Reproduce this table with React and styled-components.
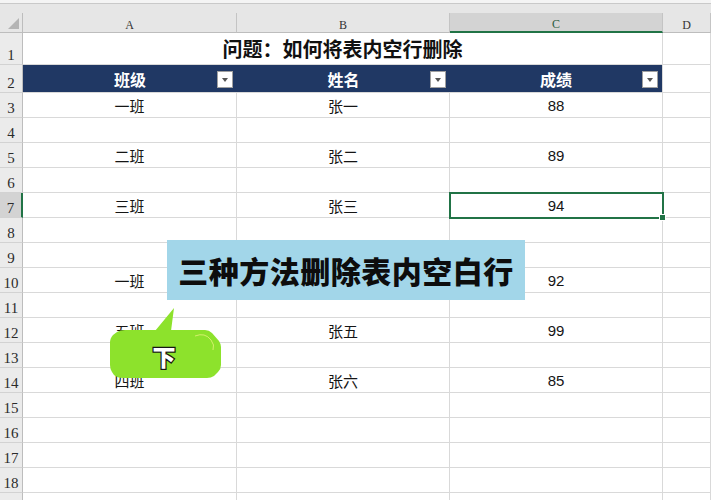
import React from 'react'
import styled, { createGlobalStyle } from 'styled-components'

const GlobalStyle = createGlobalStyle`
    html, body {
        margin: 0;
        padding: 0;
        background: #fff;
        overflow: hidden;
    }
    body {
        font-family: "Liberation Sans", "Noto Sans CJK SC", sans-serif;
    }
`

const Page = styled.div`
    position: relative;
    width: 711px;
    height: 500px;
    overflow: hidden;
    background: #fff;
`

const TopBar = styled.div`
    height: 13px;
    background: linear-gradient(#f4f4f4 0 3px, #c9c9c9 3px 4px, #e6e6e6 4px);
`

const Grid = styled.div`
    display: grid;
    grid-template-columns: 23px 214px 213px 213px 48px;
    grid-template-rows: 20px 32px 28px repeat(17, 25px);
`

const Corner = styled.div`
    box-sizing: border-box;
    background: #e6e6e6;
    border-right: 1px solid #bdbdbd;
    border-bottom: 1px solid #bdbdbd;
    display: flex;
    justify-content: flex-end;
    align-items: flex-end;
    padding: 0 3px 3px 0;
`

const SelectAll = styled.span`
    width: 0;
    height: 0;
    border-left: 11px solid transparent;
    border-bottom: 11px solid #b4b4b4;
`

const ColHead = styled.div`
    box-sizing: border-box;
    background: ${p => p.active ? '#d3d3d3' : '#e6e6e6'};
    border-right: 1px solid #c4c4c4;
    border-bottom: ${p => p.active ? '2px solid #217346' : '1px solid #bdbdbd'};
    color: ${p => p.active ? '#2a5c40' : '#333'};
    font: 12px/14px "Liberation Serif", serif;
    display: flex;
    justify-content: center;
    align-items: flex-end;
`

const RowHead = styled.div`
    box-sizing: border-box;
    background: ${p => p.active ? '#d3d3d3' : '#ebebeb'};
    border-right: ${p => p.active ? '2px solid #217346' : '1px solid #bdbdbd'};
    border-bottom: 1px solid #d2d2d2;
    color: #2b2b2b;
    font: 15px/17px "Liberation Serif", serif;
    display: flex;
    justify-content: center;
    align-items: flex-end;
`

const Cell = styled.div`
    position: relative;
    box-sizing: border-box;
    border-right: 1px solid #d9d9d9;
    border-bottom: 1px solid #d9d9d9;
    color: #151515;
    font-size: 15px;
    display: flex;
    justify-content: center;
    align-items: center;
    outline: ${p => p.selected ? '2px solid #217346' : 'none'};
    outline-offset: -1px;
    z-index: ${p => p.selected ? 1 : 0};

    ${p => p.selected && `
        &::after {
            content: '';
            position: absolute;
            right: -4px;
            bottom: -4px;
            width: 5px;
            height: 5px;
            background: #217346;
            border: 1px solid #fff;
        }
    `}
`

const TitleCell = styled.div`
    grid-column: span 3;
    box-sizing: border-box;
    border-right: 1px solid #d9d9d9;
    border-bottom: 1px solid #d9d9d9;
    font: 700 20px "Noto Sans CJK SC", sans-serif;
    color: #111;
    display: flex;
    justify-content: center;
    align-items: center;
`

const HeadCell = styled.div`
    box-sizing: border-box;
    background: #203864;
    border-bottom: 1px solid #d9d9d9;
    border-right: ${p => p.last ? '1px solid #d9d9d9' : 'none'};
    color: #fff;
    font: 700 16px "Noto Sans CJK SC", sans-serif;
    display: grid;
    grid-template-columns: 20px 1fr 20px;
    align-items: center;
`

const HeadLabel = styled.span`
    grid-column: 2;
    text-align: center;
`

const FilterButton = styled.span`
    box-sizing: border-box;
    width: 16px;
    height: 17px;
    margin-top: 2px;
    background: #fff;
    border: 1px solid #a0a0a0;
    display: flex;
    justify-content: center;
    align-items: center;

    &::before {
        content: '';
        border-left: 3.5px solid transparent;
        border-right: 3.5px solid transparent;
        border-top: 4px solid #555;
    }
`

const Caption = styled.div`
    position: absolute;
    left: 167px;
    top: 240px;
    width: 358px;
    height: 60px;
    background: #a2d6e9;
    color: #0d0d0d;
    font: 900 30px "Noto Sans CJK SC", sans-serif;
    letter-spacing: 0.5px;
    display: flex;
    justify-content: center;
    align-items: center;
`

const Bubble = styled.div`
    position: absolute;
    left: 105px;
    top: 303px;
    width: 122px;
    height: 80px;
    display: grid;

    & > * {
        grid-area: 1 / 1;
    }
`

const BubbleLabel = styled.div`
    display: flex;
    justify-content: center;
    align-items: center;
    padding: 26px 4px 0 0;
    color: #fff;
    font: 900 23px "Noto Sans CJK SC", sans-serif;
    -webkit-text-stroke: 2.5px #161616;
    paint-order: stroke fill;
`

// B10 sits under the caption, so its name is not drawn
const rows = [
    { n: 3, a: '一班', b: '张一', c: '88' },
    { n: 4 },
    { n: 5, a: '二班', b: '张二', c: '89' },
    { n: 6 },
    { n: 7, a: '三班', b: '张三', c: '94', selected: true },
    { n: 8 },
    { n: 9 },
    { n: 10, a: '一班', c: '92' },
    { n: 11 },
    { n: 12, a: '五班', b: '张五', c: '99' },
    { n: 13 },
    { n: 14, a: '四班', b: '张六', c: '85' },
    { n: 15 },
    { n: 16 },
    { n: 17 },
    { n: 18 },
    { n: 19, hidden: true },
]

const headers = ['班级', '姓名', '成绩']

const App = () => {
    return (
        <Page>
            <GlobalStyle />
            <TopBar />
            <Grid>
                <Corner><SelectAll /></Corner>
                <ColHead>A</ColHead>
                <ColHead>B</ColHead>
                <ColHead active>C</ColHead>
                <ColHead>D</ColHead>

                <RowHead>1</RowHead>
                <TitleCell>问题：如何将表内空行删除</TitleCell>
                <Cell />

                <RowHead>2</RowHead>
                {headers.map((h, i) => (
                    <HeadCell key={h} last={i === headers.length - 1}>
                        <HeadLabel>{h}</HeadLabel>
                        <FilterButton />
                    </HeadCell>
                ))}
                <Cell />

                {rows.map(r => (
                    <React.Fragment key={r.n}>
                        <RowHead active={r.selected}>{r.hidden ? '' : r.n}</RowHead>
                        <Cell>{r.a}</Cell>
                        <Cell>{r.b}</Cell>
                        <Cell selected={r.selected}>{r.c}</Cell>
                        <Cell />
                    </React.Fragment>
                ))}
            </Grid>

            <Caption>三种方法删除表内空白行</Caption>

            <Bubble>
                <svg width="122" height="80" viewBox="0 0 122 80">
                    <path
                        fill="#8de22c"
                        d="M20 27 L100 27 Q104 27 107 30 L114 38 Q116 41 116 44 L116 62 Q116 66 113 69 L109 73 Q106 75 102 75 L18 75 Q12 75 9 72 L7 69 Q5 66 5 62 L5 40 Q5 35 8 32 L12 29 Q15 27 20 27 Z M50 28 L69 5 L66 28 Z"
                    />
                    <path d="M90 33 Q100 29 106 37 Q110 42 108 47" fill="none" stroke="#e6f27c" strokeWidth="1" opacity="0.8" />
                </svg>
                <BubbleLabel>下</BubbleLabel>
            </Bubble>
        </Page>
    )
}

export default App
